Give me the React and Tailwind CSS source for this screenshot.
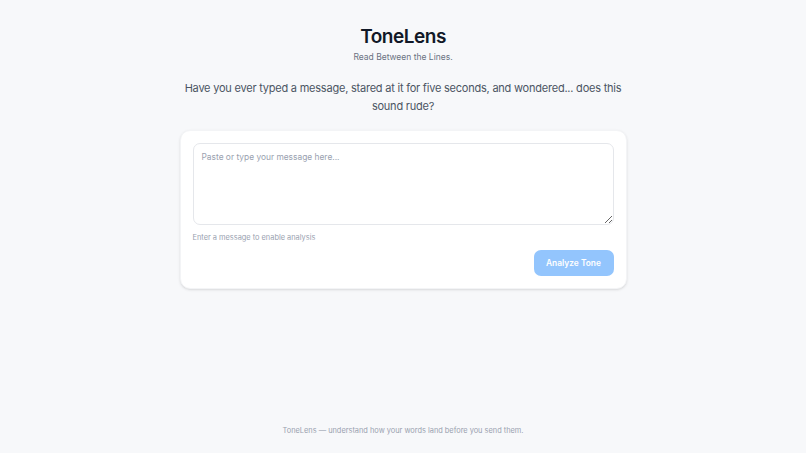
export default function App() {
  return (
    <div
      className="min-h-screen flex flex-col bg-[#f7f8fa] text-gray-900"
      style={{ fontFamily: 'Inter, "Noto Sans", sans-serif' }}
    >
      <main className="flex-1 flex flex-col items-center pt-[26px]">
        <h1 className="text-[19px] leading-[22px] font-semibold tracking-tight text-[#111827]">
          ToneLens
        </h1>
        <p className="mt-[3px] text-[8.5px] leading-[12px] text-gray-500">Read Between the Lines.</p>
        <p className="mt-[17px] w-[460px] text-center text-[11px] leading-[17.5px] tracking-[-0.02em] text-[#4b5563]">
          Have you ever typed a message, stared at it for five seconds, and wondered... does this
          sound rude?
        </p>
        <div className="mt-[15px] w-[447px] bg-white rounded-[10px] border border-gray-100 shadow-sm p-[12px]">
          <textarea
            className="block w-full h-[82px] rounded-[7px] border border-gray-200 px-[8px] py-[7px] text-[8.4px] text-gray-700 placeholder:text-gray-400 outline-none resize-y"
            placeholder="Paste or type your message here..."
          />
          <p className="mt-[8px] text-[7.4px] leading-[10px] text-gray-400">Enter a message to enable analysis</p>
          <div className="mt-[7px] flex justify-end">
            <button
              disabled
              className="w-[80px] h-[26px] rounded-[7px] bg-[#93c5fd] text-white text-[8.4px] font-semibold"
            >
              Analyze Tone
            </button>
          </div>
        </div>
      </main>
      <footer className="pb-[17px] text-center text-[7.4px] text-gray-400">
        ToneLens — understand how your words land before you send them.
      </footer>
    </div>
  );
}
